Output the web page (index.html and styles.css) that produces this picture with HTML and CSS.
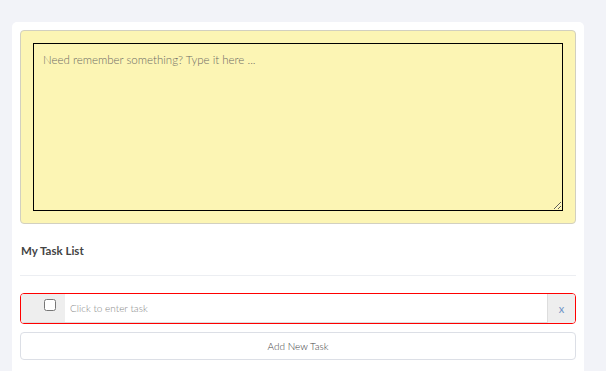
FILE: index.html
```html
<!DOCTYPE html>
<html lang="en">
<head>
  <meta charset="UTF-8" />
  <title>My Task List</title>
  <link rel="stylesheet" href="styles.css">
</head>
<body>
  <div class="card">
    <div class="note">
      <textarea class="noteText" placeholder="Need remember something? Type it here ..." autofocus></textarea>
    </div>
    <h4 class="listTitle">My Task List</h4>
    <ul class="tasks">
      <li class="task invalid">
        <span class="taskCheck"><input type="checkbox" /></span>
        <input type="text" class="taskInput" placeholder="Click to enter task" />
        <button class="taskDel" type="button">x</button>
      </li>
    </ul>
    <button class="addBtn" type="button">Add New Task</button>
  </div>
</body>
</html>
```

FILE: styles.css
```css
*{box-sizing:border-box;}
body{margin:0;padding:22px 22px 0 12px;background:#f2f3f8;font-family:"Lato","Open Sans",sans-serif;color:#444;}
.card{width:572px;height:360px;background:#fff;border-radius:5px 5px 0 0;padding:8px;}
.note{background:#fcf5b4;border:1px solid #d2d0c0;border-radius:4px;padding:12px;}
.noteText{display:block;width:100%;height:168px;margin:0;background:#fcf5b4;border:1px solid #000;border-radius:0;padding:8px 9px;font-family:"Lato",sans-serif;font-size:11.5px;font-weight:300;line-height:16px;color:#333;resize:vertical;outline:none;}
.noteText::placeholder{color:#6c6c64;font-weight:300;}
.listTitle{margin:19px 0 0;padding:0 1px 16px;font-size:11.5px;line-height:16px;font-weight:700;color:#444;border-bottom:1px solid #eceef2;}
.tasks{list-style:none;margin:17px 0 0;padding:0;}
.task{display:flex;height:31px;border:1px solid #f00;border-radius:4px;overflow:hidden;}
.taskCheck{display:flex;align-items:flex-start;width:44px;background:#eee;border-bottom:1px solid #ddd;padding:5px 0 0 23px;}
.taskCheck input{display:block;margin:0;width:12px;height:12px;}
.taskInput{flex:1;min-width:0;border:none;border-bottom:1px solid #ddd;padding:0 5px;font-family:"Lato",sans-serif;font-size:10px;font-weight:300;color:#555;outline:none;}
.taskInput::placeholder{color:#888;}
.taskDel{width:28px;border:none;border-left:1px solid #ddd;background:#eee;color:#6f94c6;font-family:"Lato",sans-serif;font-size:11px;padding:0;cursor:pointer;}
.addBtn{display:block;width:100%;height:28px;margin-top:8px;background:#fff;border:1px solid #dcdfe6;border-radius:4px;font-family:"Lato",sans-serif;font-size:10px;font-weight:300;color:#444;cursor:pointer;}
```
